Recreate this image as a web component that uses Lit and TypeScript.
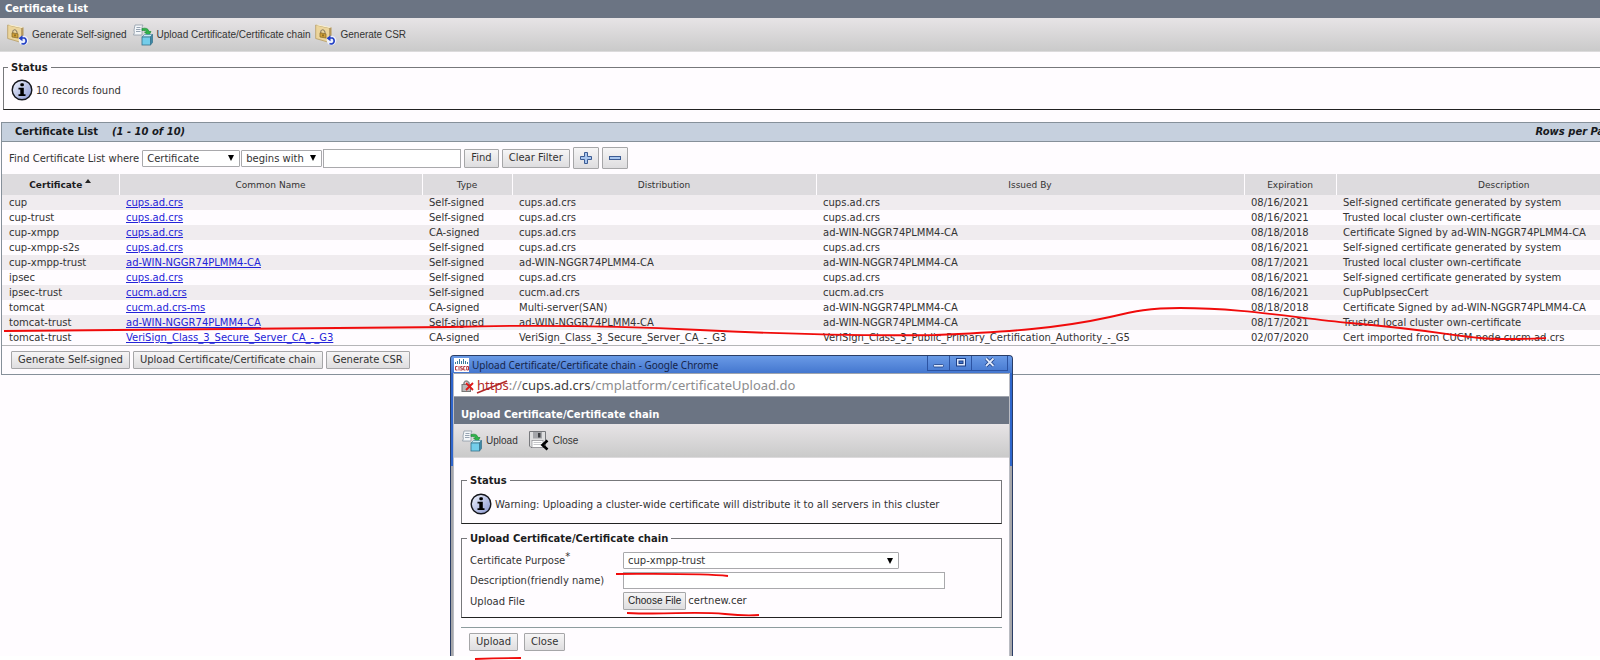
import { LitElement, html, css, svg } from "lit";
import { customElement, property, query } from "lit/decorators.js";
import { classMap } from "lit/directives/class-map.js";

type Row = [string, string, string, string, string, string, string];

const CA = "ad-WIN-NGGR74PLMM4-CA";
const ROWS: Row[] = [
  ["cup", "cups.ad.crs", "Self-signed", "cups.ad.crs", "cups.ad.crs", "08/16/2021", "Self-signed certificate generated by system"],
  ["cup-trust", "cups.ad.crs", "Self-signed", "cups.ad.crs", "cups.ad.crs", "08/16/2021", "Trusted local cluster own-certificate"],
  ["cup-xmpp", "cups.ad.crs", "CA-signed", "cups.ad.crs", CA, "08/18/2018", "Certificate Signed by ad-WIN-NGGR74PLMM4-CA"],
  ["cup-xmpp-s2s", "cups.ad.crs", "Self-signed", "cups.ad.crs", "cups.ad.crs", "08/16/2021", "Self-signed certificate generated by system"],
  ["cup-xmpp-trust", CA, "Self-signed", CA, CA, "08/17/2021", "Trusted local cluster own-certificate"],
  ["ipsec", "cups.ad.crs", "Self-signed", "cups.ad.crs", "cups.ad.crs", "08/16/2021", "Self-signed certificate generated by system"],
  ["ipsec-trust", "cucm.ad.crs", "Self-signed", "cucm.ad.crs", "cucm.ad.crs", "08/16/2021", "CupPubIpsecCert"],
  ["tomcat", "cucm.ad.crs-ms", "CA-signed", "Multi-server(SAN)", CA, "08/18/2018", "Certificate Signed by ad-WIN-NGGR74PLMM4-CA"],
  ["tomcat-trust", CA, "Self-signed", CA, CA, "08/17/2021", "Trusted local cluster own-certificate"],
  ["tomcat-trust", "VeriSign_Class_3_Secure_Server_CA_-_G3", "CA-signed", "VeriSign_Class_3_Secure_Server_CA_-_G3", "VeriSign_Class_3_Public_Primary_Certification_Authority_-_G5", "02/07/2020", "Cert imported from CUCM node cucm.ad.crs"],
];

const COLUMNS = ["Certificate", "Common Name", "Type", "Distribution", "Issued By", "Expiration", "Description"];

const shapes: Record<string, unknown> = {
  generate: svg`
    <path d="M.7 1 L14.500 4 V18.500 L.7 14.500 Z" fill="#ecd59c" stroke="#b59a62" stroke-width=".8"/>
    <path d="M.7 1 L3 .6 L16.500 3.200 L14.500 4 Z" fill="#f9efcf"/>
    <path d="M14.500 4 L16.500 3.200 V16 L14.500 18.500 Z" fill="#b4975c"/>
    <path d="M5.800 9 V7 Q8 4 10 8 V9.500" fill="none" stroke="#8d8068" stroke-width="1.100"/>
    <path d="M5 8.800 L11 9.800 V14 L5 13 Z" fill="#cf9f36" stroke="#80652a" stroke-width=".7"/>
    <path d="M8 10.500 V12.300" stroke="#4f3d10"/>
    <circle cx="16.500" cy="16.500" r="4.800" fill="#eef1fb"/>
    <path d="M14 14 H17.500 A2.900 2.900 0 1 1 14.500 19.600" fill="none" stroke="#2340c4" stroke-width="1.700"/>
    <path d="M11.500 14.300 L15.500 11.300 V17.300 Z" fill="#2340c4"/>`,
  upload: svg`
    <path d="M3 1 H11 Q9.500 3 10 5 V11 H1.500 Q3 9 2 6 Z" fill="#f4f7fa" stroke="#8d99a6" stroke-width=".8"/>
    <path d="M4.500 3.500 H8.500 M4 5.500 H8.500 M4 7.500 H8.500" stroke="#8c9aaa" stroke-width=".9"/>
    <path d="M10 4.500 Q16 3 17 7.500 L19 7.500 L16.500 12 L12.500 8 L14.500 8 Q14 5.800 10 6.500 Z" fill="#2fb34a" stroke="#16852f" stroke-width=".6"/>
    <path d="M10 13 L12.500 10.500 H20.500 L18.500 13 Z" fill="#c6edf8" stroke="#4a8aa0" stroke-width=".7"/>
    <path d="M18.500 13 L20.500 10.500 V18.500 L18.500 21 Z" fill="#3d8aa8" stroke="#35708a" stroke-width=".7"/>
    <rect x="10" y="13" width="8.500" height="8" fill="#74cdea" stroke="#35708a" stroke-width=".8"/>`,
  save: svg`
    <path d="M1.500 1.500 H17.500 V17.500 H3 L1.500 16 Z" fill="#dededf" stroke="#77787c"/>
    <rect x="5" y="2" width="9" height="6.500" fill="#a5a6aa"/>
    <rect x="10" y="3" width="2.500" height="4.500" fill="#3e3f43"/>
    <rect x="4" y="10.500" width="11" height="7" fill="#fff" stroke="#8d8e92" stroke-width=".7"/>
    <path d="M5.500 12.500 H13.500 M5.500 14.500 H13.500" stroke="#b9babe" stroke-width=".8"/>
    <path d="M19.500 10.500 L14.500 15 L19.500 19.500" fill="none" stroke="#000" stroke-width="2.600"/>`,
  info: svg`
    <defs><linearGradient id="g" x1="0" y1="0" x2="1" y2="1"><stop offset="0" stop-color="#f3f6fe"/><stop offset="1" stop-color="#8795d0"/></linearGradient></defs>
    <circle cx="11" cy="11" r="9.800" fill="url(#g)" stroke="#15161c" stroke-width="1.400"/>
    <rect x="9.300" y="4.200" width="3.600" height="3" rx="1.200" fill="#000"/>
    <path d="M7.500 8.800 H12.800 V15.200 H14.500 V17 H7.500 V15.200 H9.300 V10.500 H7.500 Z" fill="#000"/>`,
  plus: svg`
    <path d="M4.500 .5 H7.500 V4.500 H11.500 V7.500 H7.500 V11.500 H4.500 V7.500 H.5 V4.500 H4.500 Z" fill="#a9c6ee" stroke="#3d5c94"/>`,
  minus: svg`<rect x=".5" y="4.500" width="11" height="3" fill="#a9c6ee" stroke="#3d5c94"/>`,
  cisco: svg`
    <rect width="15" height="14" fill="#fff"/>
    <path d="M1.500 4 V6 M3.500 3 V6 M5.500 1 V6 M7.500 3 V6 M9.500 1 V6 M11.500 3 V6 M13.500 4 V6" stroke="#3b7a9c"/>
    <path d="M3.500 8.500 H1.500 V12 H3.500 M5 8 V12.500 M8.500 8.500 H6.700 V10.200 H8.300 V12 H6.200 M11.500 8.500 H9.700 V12 H11.500 M12.700 8.500 H14.500 V12 H12.700 Z" fill="none" stroke="#b5373f"/>`,
  lock: svg`
    <path d="M3 6 V4 Q5 0 8 4 V6" fill="none" stroke="#8a8a8a" stroke-width="1.600"/>
    <rect x="1" y="5.500" width="8.500" height="7" fill="#b9b9b9" stroke="#777"/>
    <path d="M5 4 L12 11 M12 4 L5 11" stroke="#e01b1b" stroke-width="1.800"/>`,
  min: svg`<rect x=".5" y="7.500" width="10" height="2.500" rx="1" fill="#dfe9fb" stroke="#1d3f86" stroke-width=".8"/>`,
  max: svg`<rect x="1.500" y="1.500" width="9" height="7.500" fill="#dfe9fb" stroke="#1d3f86"/><rect x="4" y="4" width="4" height="2.500" fill="#3f74cc" stroke="#1d3f86"/>`,
  close: svg`
    <path d="M2 1.500 L9.500 9 M9.500 1.500 L2 9" stroke="#1d3f86" stroke-width="3.400"/>
    <path d="M2 1.500 L9.500 9 M9.500 1.500 L2 9" stroke="#dfe9fb" stroke-width="1.800"/>`,
};

const icon = (name: string, w: number, h = w) =>
  html`<svg width=${w} height=${h} viewBox="0 0 ${w} ${h}" aria-hidden="true">${shapes[name]}</svg>`;

const shared = css`
  :host {
    font: 10px/15px "DejaVu Sans", Verdana, sans-serif;
    color: #333;
  }
  * { box-sizing: border-box; }
  svg { display: block; flex: none; }
  button, input, select { font: inherit; color: inherit; margin: 0; }
  .btn, .file::file-selector-button {
    height: 18px;
    padding: 0 6px;
    border: 1px solid #a6a6a8;
    border-radius: 1px;
    background: linear-gradient(#f6f5f6, #dedddf);
    line-height: 14px;
    white-space: nowrap;
  }
  .text { border: 1px solid #a9a9ac; background: #fff; padding: 0 4px; }
  .select {
    appearance: none;
    border: 1px solid #a9a9ac;
    border-radius: 1px;
    padding: 0 16px 0 4px;
    background: #fff
      url("data:image/svg+xml,%3Csvg xmlns='http://www.w3.org/2000/svg' width='6' height='6'%3E%3Cpath d='M0 0h6L3 6z'/%3E%3C/svg%3E")
      no-repeat right 5px center;
  }
  fieldset {
    min-width: 0;
    margin: 0;
    border: 1px solid #77777b;
    border-bottom-color: #222;
  }
  legend { margin-left: -3px; padding: 0 3px; font-weight: bold; color: #1c1c1e; }
  .message { display: flex; align-items: center; gap: 3px; }
`;

@customElement("tool-bar")
class ToolBar extends LitElement {
  @property({ attribute: false }) items: { icon: string; label: string }[] = [];
  static styles = [shared, css`
    :host {
      display: flex;
      gap: var(--tool-gap, 5px);
      align-items: center;
      height: 34px;
      padding: 0 7px;
      background: linear-gradient(#e7e4e6, #cacaca);
      border-bottom: 1px solid #dcdadc;
    }
    .tool {
      display: flex;
      align-items: center;
      gap: 3px;
      padding: 0;
      border: 0;
      background: none;
      font: 10px/22px "Liberation Sans", Arial, sans-serif;
      color: #333;
      white-space: nowrap;
    }
  `];
  render() {
    return this.items.map((i) => html`<button class="tool">${icon(i.icon, 22)}<span>${i.label}</span></button>`);
  }
}

@customElement("upload-window")
class UploadWindow extends LitElement {
  @query(".file") file!: HTMLInputElement;
  static styles = [shared, css`
    :host {
      --tool-gap: 10px;
      display: flex;
      flex-direction: column;
      padding: 0 2px;
      border: solid #2a3d66;
      border-width: 1px 1px 0;
      border-radius: 4px 4px 0 0;
      background: linear-gradient(#2f66cc, #2f66cc 110px, #a6a6aa 110px);
    }
    .caption {
      display: flex;
      align-items: flex-start;
      height: 20px;
      margin: 0 -2px;
      padding: 0 4px 0 3px;
      border-radius: 3px 3px 0 0;
      background: linear-gradient(#6a9ae6, #4477cf);
      color: #16254a;
      white-space: nowrap;
    }
    .caption svg { margin-top: 2px; }
    .name { flex: 1; padding: 2px 0 0 3px; font-family: "Noto Sans", sans-serif; }
    .controls { display: flex; }
    .control {
      display: grid;
      place-items: center;
      width: 22px;
      height: 15px;
      padding: 0;
      border: solid #2c53a2;
      border-width: 0 0 1px 1px;
      background: none;
    }
    .control svg { margin-top: 0; }
    .control:last-child { width: 37px; border-right-width: 1px; }
    .client {
      flex: 1;
      display: flex;
      flex-direction: column;
      border: solid #b9bbc2;
      border-width: 0 1px;
    }
    .address {
      display: flex;
      align-items: center;
      gap: 3px;
      height: 24px;
      padding: 0 7px;
      background: #fff;
      border: 1px solid #9fa4ad;
      border-width: 1px 0;
      font: 13px/20px "Noto Sans", sans-serif;
      color: #8c8c8e;
      white-space: nowrap;
    }
    .scheme { color: #b22a2a; }
    .host { color: #3c3c3e; }
    .heading {
      margin: 0;
      padding: 10px 7px 2px;
      background: #6b7483;
      color: #fff;
      font-size: 10px;
      line-height: 15px;
    }
    .body {
      flex: 1;
      padding: 15px 7px 0;
      background: #fffcff;
    }
    .status { height: 51px; padding: 5px 8px 0; }
    .form {
      display: grid;
      grid-template-columns: 153px 1fr;
      align-content: start;
      align-items: center;
      row-gap: 3px;
      height: 87px;
      margin-top: 7px;
      padding: 6px 8px 0;
    }
    .purpose { width: 276px; height: 17px; }
    .desc { width: 322px; height: 17px; }
    .file { height: 18px; line-height: 18px; }
    .file::file-selector-button { margin: 0 2px 0 0; padding: 0 4px; font-family: "Liberation Sans", sans-serif; font-size: 10px; color: #222; }
    .actions { display: flex; gap: 6px; margin-top: 9px; padding: 5px 8px; border-top: 1px solid #8e9c9e; }
    sup { font-size: 10px; line-height: 1px; }
  `];
  firstUpdated() {
    const chosen = new DataTransfer();
    chosen.items.add(new File([""], "certnew.cer"));
    this.file.files = chosen.files;
  }
  render() {
    return html`
      <div class="caption">
        ${icon("cisco", 15, 14)}
        <span class="name">Upload Certificate/Certificate chain - Google Chrome</span>
        <div class="controls">
          <button class="control" aria-label="Minimize">${icon("min", 12, 12)}</button>
          <button class="control" aria-label="Maximize">${icon("max", 12, 12)}</button>
          <button class="control" aria-label="Close">${icon("close", 12, 12)}</button>
        </div>
      </div>
      <div class="client">
        <div class="address">
          ${icon("lock", 13, 13)}
          <span><span class="scheme">https</span>://<span class="host">cups.ad.crs</span>/cmplatform/certificateUpload.do</span>
        </div>
        <h2 class="heading">Upload Certificate/Certificate chain</h2>
        <tool-bar .items=${[{ icon: "upload", label: "Upload" }, { icon: "save", label: "Close" }]}></tool-bar>
        <div class="body">
          <fieldset class="status">
            <legend>Status</legend>
            <div class="message">${icon("info", 22)}<span>Warning: Uploading a cluster-wide certificate will distribute it to all servers in this cluster</span></div>
          </fieldset>
          <fieldset class="form">
            <legend>Upload Certificate/Certificate chain</legend>
            <label for="purpose">Certificate Purpose<sup>*</sup></label>
            <select class="select purpose" id="purpose"><option>cup-xmpp-trust</option></select>
            <label for="desc">Description(friendly name)</label>
            <input class="text desc" id="desc" />
            <label for="file">Upload File</label>
            <input class="file" id="file" type="file" />
          </fieldset>
          <div class="actions"><button class="btn">Upload</button><button class="btn">Close</button></div>
        </div>
      </div>
    `;
  }
}

@customElement("app-root")
class AppRoot extends LitElement {
  static styles = [shared, css`
    :host { display: block; position: relative; height: 100vh; overflow: hidden; background: #fff; }
    .page { position: relative; height: calc(100vh - 4px); overflow: hidden; background: #fffcff; }
    .wide { width: calc(100% + 72px); }
    .heading { margin: 0; padding: 0 5px; background: #6b7483; color: #fff; font-size: 10px; line-height: 18px; }
    .status { height: 50px; margin: 8px 0 0 3px; padding: 4px 7px; }
    .panel { margin: 12px 0 0 1px; border: 1px solid #86909a; }
    .bar {
      display: flex;
      gap: 14px;
      height: 19px;
      padding: 0 13px;
      background: #c6d0de;
      border-bottom: 1px solid #86909a;
      color: #17191d;
      font-weight: bold;
      line-height: 18px;
    }
    .bar h2 { margin: 0; font-size: inherit; }
    .rows { margin-left: auto; padding-right: 40px; }
    .find { display: flex; align-items: center; gap: 1px; height: 32px; padding: 0 7px; }
    .find label { margin-right: 2px; }
    .find .select { height: 17px; }
    .field { width: 98px; }
    .match { width: 81px; }
    .query { width: 138px; height: 19px; }
    .find .btn { height: 19px; margin-left: 2px; }
    .find .square { display: grid; place-items: center; width: 26px; height: 22px; }
    table { width: 100%; table-layout: fixed; border-collapse: collapse; border-bottom: 1px solid #b5b5b8; }
    th {
      height: 21px;
      padding: 0;
      background: #dddbde;
      border-left: 1px solid #fffcff;
      font-size: 9px;
      font-weight: normal;
      line-height: 18px;
    }
    th:first-child { border-left: 0; font-weight: bold; color: #1c1c1e; }
    .sort { display: inline-block; vertical-align: 5px; margin-left: 3px; border: solid transparent; border-width: 0 3px 4px; border-bottom-color: #222; }
    td { height: 15px; padding: 0 7px; line-height: 15px; white-space: nowrap; }
    .odd { background: #f0ecef; }
    a { color: #2323d8; }
    .c0 { width: 117px; }
    .c1 { width: 303px; }
    .c2 { width: 90px; }
    .c3 { width: 304px; }
    .c4 { width: 428px; }
    .c5 { width: 92px; }
    .actions { display: flex; gap: 3px; padding: 5px 9px; }
    upload-window { position: absolute; top: 355px; left: 450px; bottom: 0; width: 563px; }
    .ink { position: absolute; top: 0; left: 0; overflow: visible; pointer-events: none; }
  `];
  render() {
    return html`
      <main class="page">
        <div class="wide">
          <h1 class="heading">Certificate List</h1>
          <tool-bar .items=${[
            { icon: "generate", label: "Generate Self-signed" },
            { icon: "upload", label: "Upload Certificate/Certificate chain" },
            { icon: "generate", label: "Generate CSR" },
          ]}></tool-bar>
          <fieldset class="status">
            <legend>Status</legend>
            <div class="message">${icon("info", 22)}<span>10 records found</span></div>
          </fieldset>
          <section class="panel">
            <div class="bar"><h2>Certificate List</h2><i>(1 - 10 of 10)</i><i class="rows">Rows per Page</i></div>
            <div class="find">
              <label for="field">Find Certificate List where</label>
              <select class="select field" id="field"><option>Certificate</option></select>
              <select class="select match" aria-label="Match"><option>begins with</option></select>
              <input class="text query" aria-label="Search text" />
              <button class="btn">Find</button>
              <button class="btn">Clear Filter</button>
              <button class="btn square" aria-label="Add filter">${icon("plus", 12)}</button>
              <button class="btn square" aria-label="Remove filter">${icon("minus", 12)}</button>
            </div>
            <table>
              <colgroup>${COLUMNS.map((_, i) => html`<col class="c${i}" />`)}</colgroup>
              <thead>
                <tr>${COLUMNS.map((c, i) => html`<th>${c}${i ? "" : html`<span class="sort"></span>`}</th>`)}</tr>
              </thead>
              <tbody>
                ${ROWS.map((r, n) => html`<tr class=${classMap({ odd: n % 2 === 0 })}>
                  ${r.map((v, i) => html`<td>${i === 1 ? html`<a href="#">${v}</a>` : v}</td>`)}
                </tr>`)}
              </tbody>
            </table>
            <div class="actions">
              <button class="btn">Generate Self-signed</button>
              <button class="btn">Upload Certificate/Certificate chain</button>
              <button class="btn">Generate CSR</button>
            </div>
          </section>
        </div>
        <upload-window></upload-window>
      </main>
      <svg class="ink" width="1" height="1" fill="none" stroke="#f00b0b" stroke-width="1.800" aria-hidden="true">
        <path d="M4 331 C150 330 300 328 450 327 C560 324 640 327 700 330 C780 334 860 336 935 335 C1010 332 1060 328 1110 317 C1135 311 1150 308 1180 308 C1240 308 1290 317 1350 323 C1420 329 1450 335 1480 338 C1505 340 1525 339 1546 338"/>
        <path d="M616 574 C650 574 700 573 728 576"/>
        <path d="M627 613 C670 615 690 611 725 614 Q745 616 759 615"/>
        <path d="M475 659 Q500 658 521 658"/>
        <path d="M477 393 Q492 387 507 381" stroke="#b22a2a"/>
      </svg>
    `;
  }
}
